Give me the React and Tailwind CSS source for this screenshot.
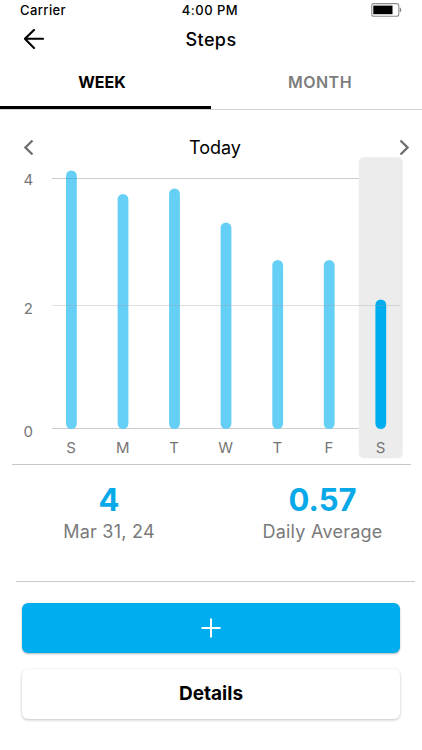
const days = [
  { label: "S", x: 71.4, top: 170.5 },
  { label: "M", x: 123, top: 194 },
  { label: "T", x: 174.5, top: 188.5 },
  { label: "W", x: 226, top: 222.5 },
  { label: "T", x: 277.7, top: 260 },
  { label: "F", x: 329.2, top: 260 },
  { label: "S", x: 380.8, top: 299.5, active: true },
];

function StatusBar() {
  return (
    <div className="grid h-5 grid-cols-[1fr_auto_1fr] items-center pl-5 pr-5 text-[13px] font-medium leading-5 tracking-[0.4px]">
      <span>Carrier</span>
      <span className="mr-[2px] whitespace-nowrap tracking-[0.5px]">4:00 PM</span>
      <svg className="justify-self-end" width="31" height="14" viewBox="0 0 31 14">
        <rect x="0.8" y="0.6" width="27" height="12.6" rx="2" fill="none" stroke="#8c8c8c" strokeWidth="1.1" />
        <rect x="2.3" y="2.6" width="19.2" height="8.6" fill="#000" />
        <path d="M29.2 4.8q1.5 2.1 0 4.2z" fill="#777" stroke="#777" strokeWidth="0.6" />
      </svg>
    </div>
  );
}

function Chart() {
  return (
    <svg className="block" width="422" height="308" viewBox="0 156 422 308">
      <g stroke="#cccccc" strokeWidth="1">
        <line x1="52" y1="178.5" x2="400" y2="178.5" />
        <line x1="52" y1="428.5" x2="400" y2="428.5" />
      </g>
      <rect x="358.8" y="157.3" width="44" height="301" rx="5" fill="#ececec" />

      {days.map((d, i) => (
        <g key={i}>
          <rect
            x={d.x - 5.4}
            y={d.top}
            width="10.8"
            height={429 - d.top}
            rx="5.4"
            fill={d.active ? "#00aeef" : "#66cff5"}
          />
          <text x={d.x - 0.3} y="452.5" textAnchor="middle" fontSize="15" fill="#757575">
            {d.label}
          </text>
        </g>
      ))}

      <line x1="66" y1="178.5" x2="77" y2="178.5" stroke="#5db3d0" />
      <line x1="52" y1="305.5" x2="400" y2="305.5" stroke="#a0a0a0" strokeOpacity="0.32" />

      <g fontSize="15" fill="#757575" textAnchor="middle">
        <text x="28.3" y="185.2">4</text>
        <text x="28.3" y="314.2">2</text>
        <text x="28.3" y="436.7">0</text>
      </g>
    </svg>
  );
}

function Stat({ value, label, className }) {
  return (
    <div className={`flex flex-col items-center ${className}`}>
      <span className="text-[31px] font-bold leading-9 text-[#08a9e8]">{value}</span>
      <span className="mt-[2px] text-lg leading-6 tracking-[0.25px] text-[#7a7a7a]">{label}</span>
    </div>
  );
}

export default function App() {
  return (
    <div className="flex h-[750px] w-[422px] flex-col overflow-hidden bg-white font-['Inter',sans-serif] text-black">
      <StatusBar />

      {/* header */}
      <div className="grid h-[38px] grid-cols-[1fr_auto_1fr] items-center px-5">
        <button className="ml-1 w-5">
          <svg width="20" height="20" viewBox="0 0 20 20" fill="none" stroke="#000" strokeWidth="2.1" strokeLinecap="round" strokeLinejoin="round">
            <path d="M10 .9.9 9.8 10 18.9M1 9.8h18" />
          </svg>
        </button>
        <h1 className="pt-px text-lg font-medium leading-6 tracking-[0.4px]">Steps</h1>
      </div>

      {/* tabs */}
      <div className="flex h-[52px] border-b border-[#d4d4d4] text-base font-bold leading-6">
        <button className="-mb-px h-[51px] w-[211px] border-b-[3px] border-black pr-[7px] pb-px">WEEK</button>
        <button className="h-[51px] w-[211px] pb-1 pl-[7px] font-semibold tracking-[0.5px] text-[#7d7d7d]">MONTH</button>
      </div>

      {/* period */}
      <div className="mt-[27px] flex h-5 items-center justify-between pl-[24px] pr-[13px]">
        <svg width="10" height="16" viewBox="0 0 10 16" fill="none" stroke="#707070" strokeWidth="2.3">
          <path d="M8.5 1.5 1.5 8.5l7 7" />
        </svg>
        <span className="mr-[3px] pt-[2px] text-lg leading-5">Today</span>
        <svg width="10" height="16" viewBox="0 0 10 16" fill="none" stroke="#707070" strokeWidth="2.3">
          <path d="m1.5 1.5 7 7-7 7" />
        </svg>
      </div>

      <div className="-mt-px">
        <Chart />
      </div>

      {/* summary */}
      <div className="ml-3 mr-[11px] border-t border-[#c8c8c8]" />
      <div className="flex h-[116px] pt-[17px]">
        <Stat value="4" label="Mar 31, 24" className="w-[218px]" />
        <Stat value="0.57" label="Daily Average" className="w-[204px] pl-[5px]" />
      </div>
      <div className="ml-4 mr-[7px] border-t border-[#c8c8c8]" />

      {/* actions */}
      <div className="flex flex-col gap-4 px-[22px] pt-[21px]">
        <button className="flex h-[50px] items-center justify-center rounded-md bg-[#00aeef] shadow-[0_1px_2px_rgba(0,0,0,0.3)]">
          <svg width="20" height="20" viewBox="0 0 20 20" stroke="#fff" strokeWidth="2">
            <path d="M10 .5v19M.5 10h19" />
          </svg>
        </button>
        <button className="h-[50px] rounded-md bg-white text-[19px] font-bold shadow-[0_1px_3px_rgba(0,0,0,0.25)]">
          Details
        </button>
      </div>
    </div>
  );
}
